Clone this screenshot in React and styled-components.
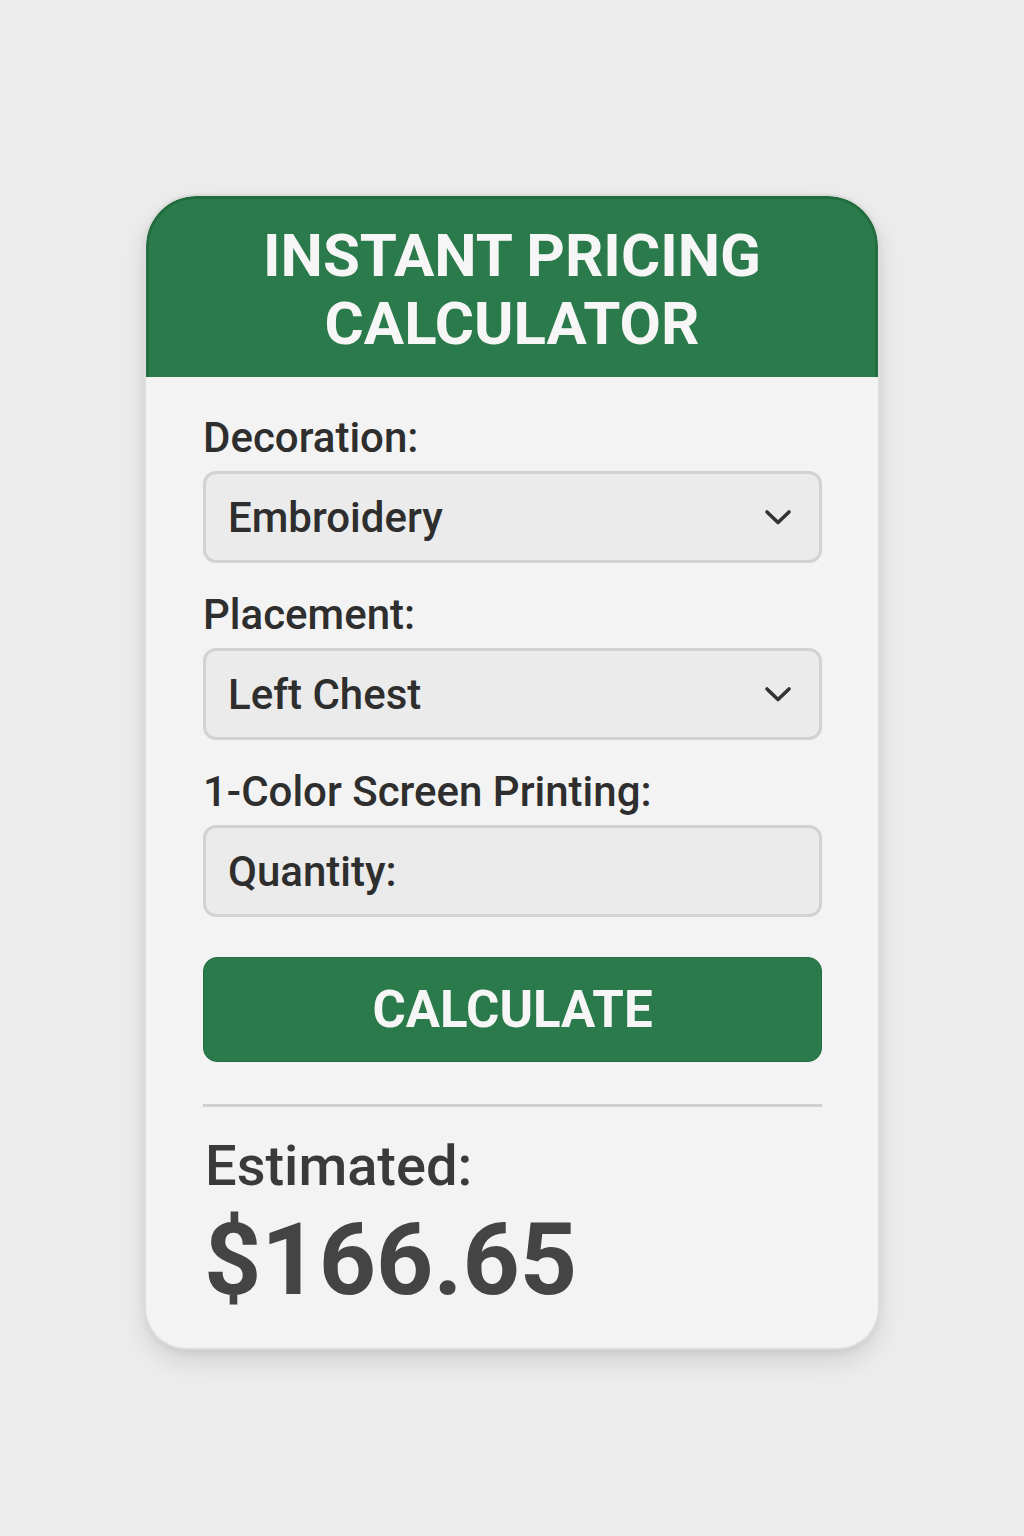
import React from "react";
import styled, { createGlobalStyle } from "styled-components";

const Global = createGlobalStyle`
  html, body { margin: 0; padding: 0; background: #ececec; }
  body { font-family: Roboto, "Liberation Sans", Arial, sans-serif; }
`;

const Page = styled.div`
  width: 1024px;
  height: 1536px;
  box-sizing: border-box;
  padding-top: 196px;
  display: flex;
  justify-content: center;
  align-items: flex-start;
  background: #ececec;
`;

const Card = styled.div`
  width: 732px;
  background: #f3f3f3;
  border-radius: 50px 50px 40px 40px;
  box-shadow: 0 0 0 2px #dcdcdc, 0 12px 26px rgba(0, 0, 0, 0.12),
    0 3px 8px rgba(0, 0, 0, 0.08);
  overflow: hidden;
`;

const Header = styled.div`
  background: #2b7a4b;
  border: 3px solid #226c3f;
  border-bottom: none;
  border-radius: 50px 50px 0 0;
  height: 181px;
  box-sizing: border-box;
  display: flex;
  align-items: center;
  justify-content: center;
  text-align: center;
`;

const Title = styled.h1`
  margin: 0;
  color: #f6f6f6;
  font-size: 60px;
  line-height: 68px;
  font-weight: 700;
  padding-top: 4px;
`;

const Body = styled.div`
  padding: 37px 56px 34px 57px;
  display: flex;
  flex-direction: column;
`;

const Label = styled.div`
  color: #2e2e2e;
  font-size: 42px;
  line-height: 48px;
  font-weight: 500;
  margin-bottom: 9px;
`;

const Field = styled.div`
  height: 92px;
  box-sizing: border-box;
  border: 3px solid #d2d2d2;
  border-radius: 13px;
  background: #ebebeb;
  display: flex;
  align-items: center;
  justify-content: space-between;
  padding: 0 27px 0 22px;
  margin-bottom: ${(p) => p.$mb}px;
  color: #2e2e2e;
  font-size: 42px;
  font-weight: 500;
`;

const Chevron = () => (
  <svg width="28" height="18" viewBox="0 0 28 18">
    <path
      d="M3 4 L14 14.5 L25 4"
      fill="none"
      stroke="#333"
      strokeWidth="3.6"
      strokeLinecap="round"
      strokeLinejoin="round"
    />
  </svg>
);

const Button = styled.div`
  height: 105px;
  border-radius: 14px;
  background: #2b7a4b;
  border: 1px solid #236e41;
  box-sizing: border-box;
  display: flex;
  align-items: center;
  justify-content: center;
  color: #f6f6f6;
  font-size: 51px;
  font-weight: 700;
`;

const Divider = styled.div`
  height: 3px;
  background: #d0d0d0;
  margin: 42px 0 25px;
`;

const Estimated = styled.div`
  color: #3a3a3a;
  font-size: 56px;
  line-height: 68px;
  font-weight: 500;
  margin-left: 2px;
`;

const Price = styled.div`
  color: #444;
  font-size: 100px;
  line-height: 108px;
  font-weight: 700;
  margin-left: 1px;
  margin-top: 6px;
`;

export default function App() {
  return (
    <>
      <Global />
      <Page>
        <Card>
          <Header>
            <Title>
              INSTANT PRICING
              <br />
              CALCULATOR
            </Title>
          </Header>
          <Body>
            <Label>Decoration:</Label>
            <Field $mb={28}>
              Embroidery
              <Chevron />
            </Field>
            <Label>Placement:</Label>
            <Field $mb={28}>
              Left Chest
              <Chevron />
            </Field>
            <Label>1-Color Screen Printing:</Label>
            <Field $mb={40}>Quantity:</Field>
            <Button>CALCULATE</Button>
            <Divider />
            <Estimated>Estimated:</Estimated>
            <Price>$166.65</Price>
          </Body>
        </Card>
      </Page>
    </>
  );
}
